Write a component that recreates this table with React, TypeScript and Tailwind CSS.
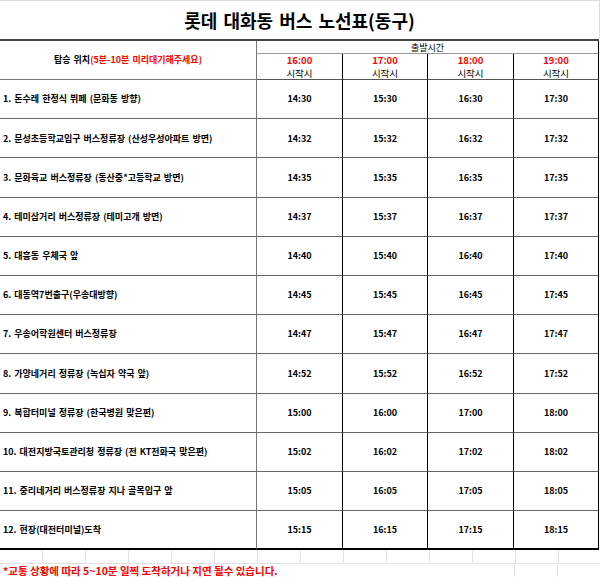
import React from 'react';

// 롯데 대화동 버스 노선표 - spreadsheet style
const stops: [string, string][] = [
  ['1. 돈수레 한정식 뷔페 (문화동 방향)', '14:30'],
  ['2. 문성초등학교입구 버스정류장 (산성우성아파트 방면)', '14:32'],
  ['3. 문화육교 버스정류장 (동산중*고등학교 방면)', '14:35'],
  ['4. 테미삼거리 버스정류장 (테미고개 방면)', '14:37'],
  ['5. 대흥동 우체국 앞', '14:40'],
  ['6. 대동역7번출구(우송대방향)', '14:45'],
  ['7. 우송어학원센터 버스정류장', '14:47'],
  ['8. 가양네거리 정류장 (녹십자 약국 앞)', '14:52'],
  ['9. 복합터미널 정류장 (한국병원 맞은편)', '15:00'],
  ['10. 대전지방국토관리청 정류장 (전 KT전화국 맞은편)', '15:02'],
  ['11. 중리네거리 버스정류장 지나 골목입구 앞', '15:05'],
  ['12. 현장(대전터미널)도착', '15:15'],
];

const departures = ['16:00', '17:00', '18:00', '19:00'];

// add hours to "HH:MM"
const shift = (t: string, h: number) => {
  const [hh, mm] = t.split(':');
  return `${Number(hh) + h}:${mm}`;
};

export default function App() {
  return (
    <div className="w-[600px] h-[577px] bg-white overflow-hidden font-['Noto_Sans_CJK_KR',sans-serif] text-black">
      {/* Title */}
      <div className="h-[39px] flex items-center justify-center border-t border-r border-[#dcdcdc]">
        <h1 className="text-[18px] font-bold leading-none [word-spacing:2px]">롯데 대화동 버스 노선표(동구)</h1>
      </div>

      {/* Timetable */}
      <div className="w-[599px] grid grid-cols-[257px_86px_85px_86px_85px] grid-rows-[13px_26px_repeat(12,39.2px)] border-t-2 border-[#444]">
        <div className="row-span-2 flex items-center justify-center border-r border-b border-[#777] text-[9px] font-semibold [word-spacing:1px]">
          <span>
            탑승 위치<span className="text-[#ff0000]">(5분-10분 미리대기해주세요)</span>
          </span>
        </div>
        <div className="col-span-4 flex items-center justify-center border-r border-r-black border-b border-b-[#999] text-[9px] leading-none">
          출발시간
        </div>
        {departures.map((d) => (
          <div
            key={d}
            className="flex flex-col items-center justify-center border-r border-r-black border-b border-b-[#555] text-[9.5px] leading-[13px]"
          >
            <span className="text-[#ff0000] font-bold">{d}</span>
            <span>시작시</span>
          </div>
        ))}

        {stops.map(([name, first], i) => {
          const last = i === stops.length - 1;
          return (
            <React.Fragment key={name}>
              <div
                className={`flex items-center pl-[3px] border-r border-r-[#777] text-[9px] font-bold whitespace-nowrap [word-spacing:1px] ${
                  last ? 'border-b-2 border-b-black' : 'border-b border-b-[#666]'
                }`}
              >
                {name}
              </div>
              {[0, 1, 2, 3].map((h) => (
                <div
                  key={h}
                  className={`flex items-center justify-center border-r border-r-black text-[9px] font-bold ${
                    last ? 'border-b-2 border-b-black' : 'border-b border-b-[#666]'
                  }`}
                >
                  {shift(first, h)}
                </div>
              ))}
            </React.Fragment>
          );
        })}
      </div>

      {/* Sheet gridlines below the table */}
      <div className="flex h-[14px]">
        {Array.from({ length: 14 }).map((_, i) => (
          <div key={i} className="w-[43px] shrink-0 border-r border-b border-[#e3e3e3]" />
        ))}
      </div>
      <div className="flex h-[14px]">
        <div className="w-[472px] shrink-0 flex items-center pl-[3px] text-[10.5px] font-bold text-[#ff0000] whitespace-nowrap leading-none">
          *교통 상황에 따라 5~10분 일찍 도착하거나 지연 될수 있습니다.
        </div>
        {Array.from({ length: 3 }).map((_, i) => (
          <div key={i} className="w-[43px] shrink-0 border-r border-b border-[#e3e3e3]" />
        ))}
      </div>
    </div>
  );
}
